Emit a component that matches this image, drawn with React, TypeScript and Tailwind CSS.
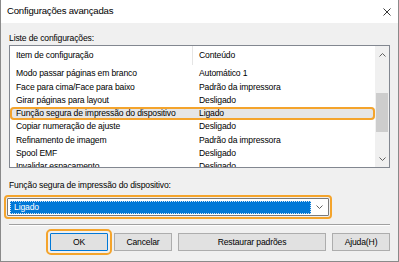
import React from 'react';

type Row = { item: string; value: string; selected?: boolean };

const rows: Row[] = [
  { item: 'Modo passar páginas em branco', value: 'Automático 1' },
  { item: 'Face para cima/Face para baixo', value: 'Padrão da impressora' },
  { item: 'Girar páginas para layout', value: 'Desligado' },
  { item: 'Função segura de impressão do dispositivo', value: 'Ligado', selected: true },
  { item: 'Copiar numeração de ajuste', value: 'Desligado' },
  { item: 'Refinamento de imagem', value: 'Padrão da impressora' },
  { item: 'Spool EMF', value: 'Desligado' },
  { item: 'Invalidar espaçamento', value: 'Desligado' },
];

const Chevron = ({ up = false }: { up?: boolean }) => (
  <svg width="7" height="4" viewBox="0 0 7 4" className={up ? '' : 'rotate-180'}>
    <path d="M0.5 3.5 L3.5 0.5 L6.5 3.5" fill="none" stroke="#606060" strokeWidth="1" />
  </svg>
);

const App = () => {
  return (
    <div
      className="w-[399px] h-[262px] bg-[#f0f0f0] border-x border-b border-[#8a8a8a] flex flex-col text-[8.6px] tracking-[-0.15px] text-black overflow-hidden"
      style={{ fontFamily: '"Liberation Sans", Arial, sans-serif' }}
    >
      {/* Title bar */}
      <div className="h-[23px] bg-white flex items-center justify-between pl-[6px] pr-[7px] shrink-0">
        <span className="text-[9.6px] tracking-[-0.2px]">Configurações avançadas</span>
        <svg width="8" height="8" viewBox="0 0 8 8">
          <path d="M0.5 0.5 L7.5 7.5 M7.5 0.5 L0.5 7.5" stroke="#222" strokeWidth="0.9" />
        </svg>
      </div>

      <div className="flex flex-col px-[8px]">
        <div className="mt-[9px] h-[12px] leading-[12px]">Liste de configurações:</div>

        {/* List box */}
        <div className="mt-[1px] h-[123px] border border-[#828790] bg-white flex overflow-hidden">
          <div className="flex-1 flex flex-col overflow-hidden">
            <div className="h-[21px] flex shrink-0">
              <div className="w-[182px] h-[19px] pl-[6px] flex items-center">Item de configuração</div>
              <div className="w-px h-[19px] bg-[#e5e5e5]" />
              <div className="h-[19px] pl-[6px] flex items-center">Conteúdo</div>
            </div>
            {rows.map((r, i) => (
              <div
                key={i}
                className={`h-[13.3px] flex items-center shrink-0 whitespace-nowrap ${
                  r.selected ? 'bg-[#e6e6e6] outline-2 outline-offset-[-2px] outline-[#f4a42c] rounded-[4px]' : ''
                }`}
              >
                <div className="w-[183px] pl-[6px]">{r.item}</div>
                <div className="pl-[6px]">{r.value}</div>
              </div>
            ))}
          </div>

          {/* Scrollbar */}
          <div className="w-[14px] bg-[#f0f0f0] flex flex-col items-center shrink-0">
            <div className="h-[17px] flex items-center justify-center">
              <Chevron up />
            </div>
            <div className="mt-[30px] w-[12px] h-[39px] bg-[#cdcdcd]" />
            <div className="flex-1" />
            <div className="h-[17px] flex items-center justify-center">
              <Chevron />
            </div>
          </div>
        </div>

        <div className="mt-[11px] h-[12px] leading-[12px]">Função segura de impressão do dispositivo:</div>

        {/* Combo box */}
        <div className="mt-[7px] -ml-[2px] w-[322px] h-[18px] border border-[#7a7a7a] bg-white flex items-center outline-2 outline-offset-[1px] outline-[#f4a42c] rounded-[1px]">
          <div className="ml-[2px] h-[13px] w-[301px] bg-[#0078d7] border border-dotted border-[#cfe3f5] text-white flex items-center pl-[3px]">
            Ligado
          </div>
          <div className="flex-1 flex items-center justify-center">
            <Chevron />
          </div>
        </div>

        {/* Separator */}
        <div className="mt-[8px] h-[2px] border-t border-[#a0a0a0] border-b border-b-white" />

        {/* Buttons */}
        <div className="mt-[7px] flex justify-end gap-[6px]">
          <button className="w-[58px] h-[18px] bg-[#e1e1e1] border border-[#0078d7] outline-2 outline-offset-[2px] outline-[#f4a42c] rounded-[1px]">
            OK
          </button>
          <button className="w-[58px] h-[18px] bg-[#e1e1e1] border border-[#adadad]">Cancelar</button>
          <button className="w-[148px] h-[18px] bg-[#e1e1e1] border border-[#adadad]">Restaurar padrões</button>
          <button className="w-[58px] h-[18px] bg-[#e1e1e1] border border-[#adadad]">Ajuda(H)</button>
        </div>
      </div>
    </div>
  );
};

export default App;
